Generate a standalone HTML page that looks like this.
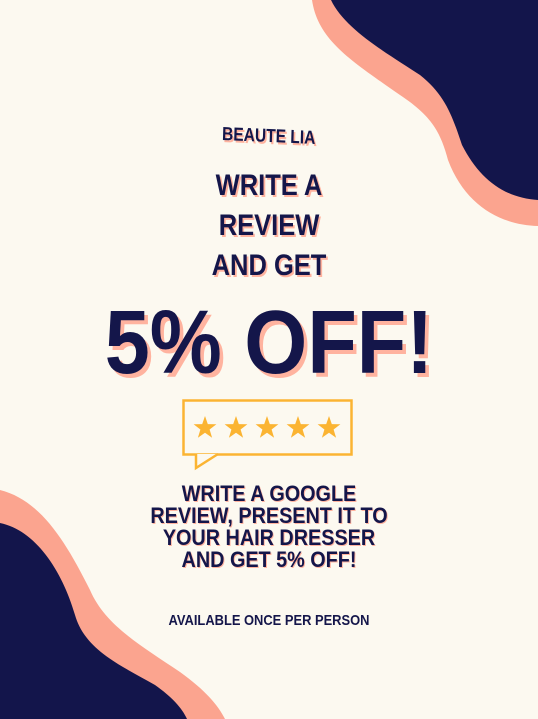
<!DOCTYPE html>
<html><head><meta charset="utf-8"><style>
html,body{margin:0;padding:0}
body{width:538px;height:719px;background:#fcf9f0;position:relative;overflow:hidden;font-family:"Liberation Sans Narrow","Liberation Sans",sans-serif;font-weight:bold;color:#14164a}
svg.bg{position:absolute;left:0;top:0}
.t{position:absolute;left:0;width:538px;text-align:center;text-shadow:2px 2px 0 #ffb39f;transform-origin:269px 0}
</style></head><body>
<svg class="bg" width="538" height="719" viewBox="0 0 538 719">
<path d="M312 0 C318 40 350 60 400 95 C430 115 440 130 448 160 C465 205 500 225 538 226 L538 0 Z" fill="#fba48f"/>
<path d="M331 0 C345 30 390 55 420 75 C445 95 452 115 462 145 C480 180 505 198 538 200 L538 0 Z" fill="#13154b"/>
<path d="M0 490 C40 500 65 540 90 590 C105 625 140 645 180 672 C205 690 218 705 225 719 L0 719 Z" fill="#fba48f"/>
<path d="M0 523 C35 530 62 570 75 615 C85 650 120 665 155 685 C172 697 182 708 187 719 L0 719 Z" fill="#13154b"/>
<rect x="183.5" y="400.5" width="168" height="54" fill="none" stroke="#fbb432" stroke-width="2.5"/>
<path d="M196 454 L196 468 L218 454" fill="#fcf9f0" stroke="#fbb432" stroke-width="2.5"/>
<g fill="#fbb432">
<polygon id="s" points="0,-12 2.8,-3.9 11.4,-3.7 4.6,1.5 7.1,9.7 0,4.8 -7.1,9.7 -4.6,1.5 -11.4,-3.7 -2.8,-3.9" transform="translate(205,428)"/>
<use href="#s" x="31"/><use href="#s" x="62"/><use href="#s" x="93"/><use href="#s" x="124"/>
</g>
</svg>
<div class="t" style="top:126px;font-size:19px;transform:scaleX(0.82) rotate(2deg)">BEAUTE LIA</div>
<div class="t" style="top:166px;font-size:30px;line-height:40px;transform:scaleX(0.85)">WRITE A<br>REVIEW<br>AND GET</div>
<div class="t" style="top:293px;font-size:90px;line-height:100px;text-shadow:4px 4px 0 #ffb39f;transform:scaleX(0.9)">5% OFF!</div>
<div class="t" style="top:483px;font-size:22px;line-height:22px;text-shadow:1px 1px 0 #ffb39f;transform:scaleX(0.9)">WRITE A GOOGLE<br>REVIEW, PRESENT IT TO<br>YOUR HAIR DRESSER<br>AND GET 5% OFF!</div>
<div class="t" style="top:612px;font-size:15px;text-shadow:none;transform:scaleX(0.86)">AVAILABLE ONCE PER PERSON</div>
</body></html>
